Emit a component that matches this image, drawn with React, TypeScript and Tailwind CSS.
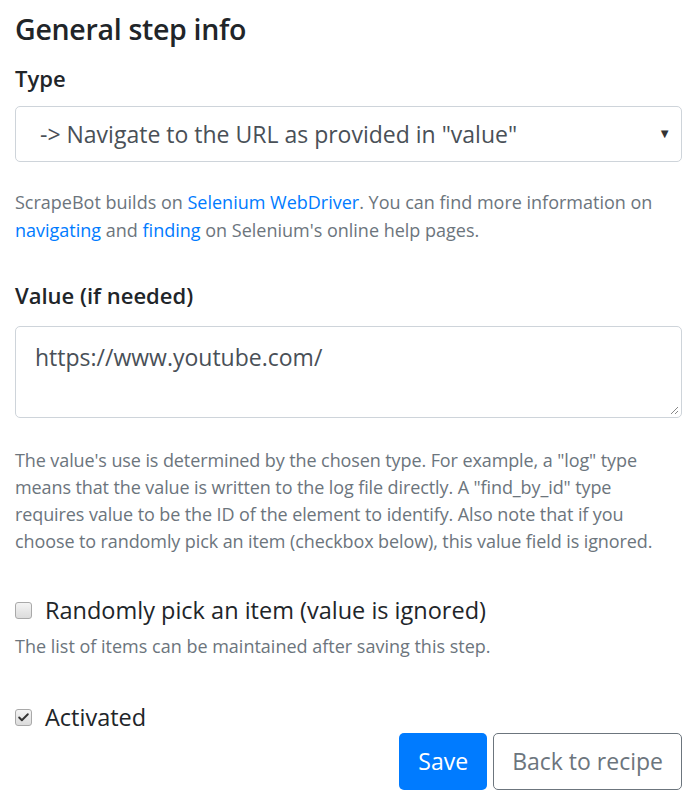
import { Check } from 'lucide-react'

const font = { fontFamily: '"Open Sans", "Noto Sans", sans-serif' }

function Box({ checked }: { checked?: boolean }) {
  return (
    <span className="flex h-[17px] w-[17px] flex-shrink-0 items-center justify-center rounded-[3px] border border-[#a9a9a9] bg-gradient-to-b from-[#f4f4f4] to-[#dcdcdc]">
      {checked && <Check size={13} strokeWidth={3.5} className="text-[#333]" />}
    </span>
  )
}

export default function App() {
  return (
    <div className="min-h-[800px] w-[695px] bg-white pl-[15px] pr-[13px] pt-[11px] text-[#212529]" style={font}>
      <h1 className="text-[28.5px] font-semibold leading-[36px] tracking-[-0.3px]">General step info</h1>

      <div className="mt-[18px] text-[22px] font-semibold leading-[26px]">Type</div>
      <div className="mt-[15px] flex h-[56px] items-center justify-between rounded-[5px] border border-[#ced4da] pl-[24px] pr-[10px] text-[23px] text-[#495057]">
        <span>-&gt; Navigate to the URL as provided in "value"</span>
        <span className="text-[13px] text-[#333]">▼</span>
      </div>

      <p className="mt-[26px] text-[18px] leading-[28px] text-[#6c757d]">
        ScrapeBot builds on <a className="text-[#007bff]">Selenium WebDriver</a>. You can find more information on{' '}
        <a className="text-[#007bff]">navigating</a> and <a className="text-[#007bff]">finding</a> on Selenium's online help pages.
      </p>

      <div className="mt-[38px] text-[22px] font-semibold leading-[26px]">Value (if needed)</div>
      <div className="relative mt-[18px] h-[92px] rounded-[5px] border border-[#ced4da] px-[19px] pt-[13px] text-[23px] text-[#495057]">
        https://www.youtube.com/
        <svg className="absolute bottom-[2px] right-[2px]" width="10" height="10" viewBox="0 0 10 10">
          <path d="M9 2 L2 9 M9 6 L6 9" stroke="#888" strokeWidth="1" />
        </svg>
      </div>

      <p className="mt-[29px] pr-[2px] text-[18px] leading-[27px] tracking-[-0.1px] text-[#6c757d]">
        The value's use is determined by the chosen type. For example, a "log" type means that the value is written to the log file directly. A "find_by_id" type requires value to be the ID of the element to identify. Also note that if you choose to randomly pick an item (checkbox below), this value field is ignored.
      </p>

      <div className="mt-[41px] flex items-center gap-[13px]">
        <Box />
        <span className="text-[23.5px] font-medium leading-[28px]">Randomly pick an item (value is ignored)</span>
      </div>
      <p className="mt-[9px] text-[18px] leading-[27px] text-[#6c757d]">The list of items can be maintained after saving this step.</p>

      <div className="mt-[43px] flex items-center gap-[13px]">
        <Box checked />
        <span className="text-[23.5px] font-medium leading-[28px]">Activated</span>
      </div>

      <div className="mt-[2px] flex justify-end gap-[6px]">
        <button className="h-[57px] rounded-[5px] bg-[#007bff] px-[19px] text-[23px] text-white">Save</button>
        <button className="h-[57px] rounded-[5px] border border-[#6c757d] px-[18px] text-[23px] text-[#6c757d]">Back to recipe</button>
      </div>
    </div>
  )
}
